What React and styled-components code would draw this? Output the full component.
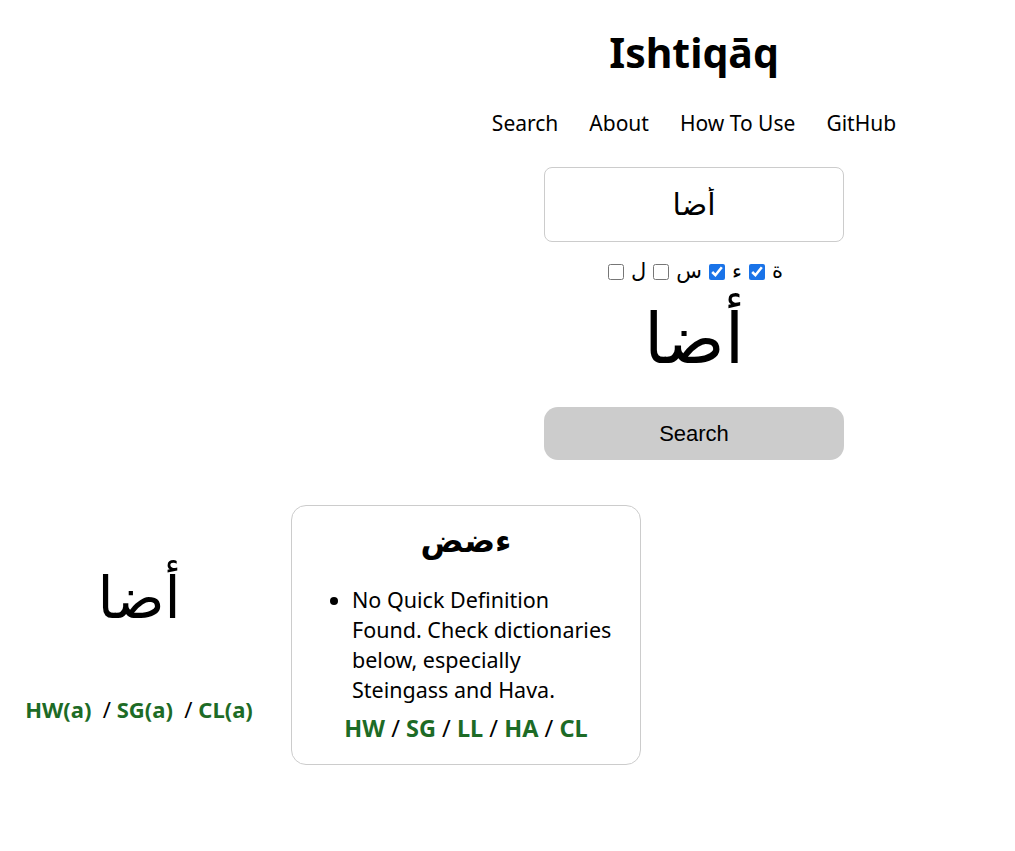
import React from "react";
import styled, { createGlobalStyle } from "styled-components";

const GlobalStyle = createGlobalStyle`
  html, body { overflow: hidden; }
  body {
    margin: 8px;
    background: #fff;
    color: #000;
    font-family: "Noto Sans", "DejaVu Sans", sans-serif;
  }
`;

const green = "#1d6b26";

const Page = styled.div`
  width: 1372px;
  display: flex;
  flex-direction: column;
  align-items: center;
`;

const Title = styled.h1`
  margin: 18px 0 0;
  font-size: 41px;
  font-weight: 700;
  line-height: 1.3;
`;

const Nav = styled.nav`
  display: flex;
  gap: 31px;
  margin-top: 30px;
  font-size: 21px;
`;

const NavLink = styled.a`
  color: #000;
  text-decoration: none;
`;

const SearchBox = styled.input`
  box-sizing: border-box;
  width: 300px;
  height: 75px;
  margin-top: 30px;
  border: 1px solid #ccc;
  border-radius: 8px;
  text-align: center;
  font-size: 30px;
  font-family: "DejaVu Sans", sans-serif;
  outline: none;
`;

const Letters = styled.div`
  direction: rtl;
  display: flex;
  align-items: center;
  gap: 4px;
  margin-top: 19px;
  font-size: 21px;
  font-family: "DejaVu Sans", sans-serif;
  line-height: 1;
`;

const Box = styled.input`
  margin: 0 3px;
  width: 16px;
  height: 16px;
  accent-color: #1a73e8;
`;

const Preview = styled.div`
  font-size: 70px;
  font-family: "DejaVu Sans", sans-serif;
  line-height: 1;
  margin-top: 22px;
`;

const Button = styled.button`
  width: 300px;
  height: 53px;
  margin-top: 33px;
  border: none;
  border-radius: 14px;
  background: #ccc;
  font-family: "Liberation Sans", Arial, sans-serif;
  font-size: 22px;
  color: #000;
`;

const Results = styled.div`
  align-self: flex-start;
  display: grid;
  grid-template-columns: 262px 350px;
  column-gap: 21px;
  align-items: start;
  margin-top: 45px;
`;

const Side = styled.div`
  text-align: center;
  padding-top: 64px;
`;

const SideWord = styled.div`
  font-size: 58px;
  font-family: "DejaVu Sans", sans-serif;
  line-height: 1;
`;

const LinkRow = styled.div`
  margin-top: ${(p) => p.top || 0}px;
  font-size: ${(p) => p.size || 21}px;
  line-height: 30px;
  text-align: center;
  white-space: nowrap;
`;

const DictLink = styled.a`
  color: ${green};
  font-weight: 700;
  text-decoration: none;
`;

const Card = styled.div`
  box-sizing: border-box;
  height: 260px;
  border: 1px solid #ccc;
  border-radius: 15px;
  padding: 16px 20px 0;
`;

const CardTitle = styled.div`
  text-align: center;
  font-size: 32px;
  font-weight: 700;
  font-family: "DejaVu Sans", sans-serif;
  line-height: 1.2;
`;

const Defs = styled.ul`
  margin: 24px 0 0;
  padding-left: 40px;
  font-size: 21.5px;
  line-height: 30px;
`;

const links = ["HW", "SG", "LL", "HA", "CL"];

export default function App() {
  return (
    <Page>
      <GlobalStyle />
      <Title>Ishtiqāq</Title>
      <Nav>
        <NavLink href="#">Search</NavLink>
        <NavLink href="#">About</NavLink>
        <NavLink href="#">How To Use</NavLink>
        <NavLink href="#">GitHub</NavLink>
      </Nav>
      <SearchBox defaultValue="أضا" dir="rtl" />
      <Letters>
        ة<Box type="checkbox" defaultChecked />
        ء<Box type="checkbox" defaultChecked />
        س<Box type="checkbox" />
        ل<Box type="checkbox" />
      </Letters>
      <Preview>أضا</Preview>
      <Button>Search</Button>
      <Results>
        <Side>
          <SideWord>أضا</SideWord>
          <LinkRow top={67} size={22}>
            <DictLink href="#">HW(a)</DictLink>&nbsp; / <DictLink href="#">SG(a)</DictLink>
            &nbsp; / <DictLink href="#">CL(a)</DictLink>
          </LinkRow>
        </Side>
        <Card>
          <CardTitle>ءضض</CardTitle>
          <Defs>
            <li>No Quick Definition Found. Check dictionaries below, especially Steingass and Hava.</li>
          </Defs>
          <LinkRow top={8} size={23.5}>
            {links.map((l, i) => (
              <React.Fragment key={l}>
                {i > 0 && " / "}
                <DictLink href="#">{l}</DictLink>
              </React.Fragment>
            ))}
          </LinkRow>
        </Card>
      </Results>
    </Page>
  );
}
